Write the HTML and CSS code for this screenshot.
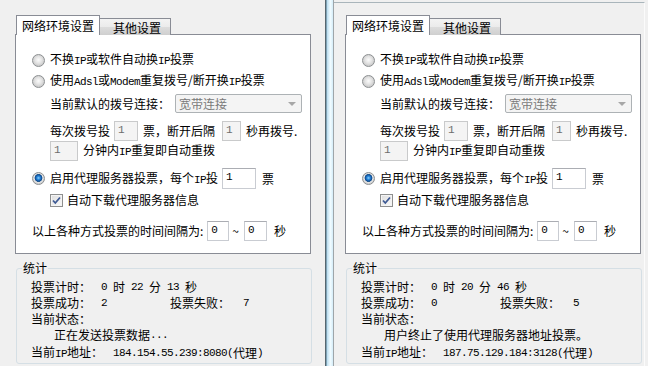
FILE: index.html
```html
<!DOCTYPE html>
<html>
<head>
<meta charset="utf-8">
<link rel="stylesheet" href="styles.css">
</head>
<body>
<div class="screen">
  <div class="win win-left">
    <div class="tabs">
      <div class="tab tab-active">网络环境设置</div>
      <div class="tab tab-other">其他设置</div>
    </div>
    <div class="panel">
      <div class="row r1"><span class="radio"></span><span>不换<span class="m">IP</span>或软件自动换<span class="m">IP</span>投票</span></div>
      <div class="row r2"><span class="radio"></span><span>使用<span class="m">Adsl</span>或<span class="m">Modem</span>重复拨号/断开换<span class="m">IP</span>投票</span></div>
      <div class="row r3 ind"><span>当前默认的拨号连接：</span><div class="combo"><span>宽带连接</span><span class="arrow"></span></div></div>
      <div class="row r4 ind"><span>每次拨号投</span><span class="inp dis i1">1</span><span class="t1">票，断开后隔</span><span class="inp dis i2">1</span><span class="t2">秒再拨号.</span></div>
      <div class="row r5 ind"><span class="inp dis i3">1</span><span class="t3">分钟内<span class="m">IP</span>重复即自动重拨</span></div>
      <div class="row r6"><span class="radio on"></span><span>启用代理服务器投票，每个<span class="m">IP</span>投</span><span class="inp i4">1</span><span class="t4">票</span></div>
      <div class="row r7 ind"><span class="check"><svg width="13" height="13" viewBox="0 0 13 13"><path d="M3 6.5 L5.3 9 L10 3.5" fill="none" stroke="#3e5a94" stroke-width="1.8"/></svg></span><span>自动下载代理服务器信息</span></div>
      <div class="row r8"><span>以上各种方式投票的时间间隔为:</span><span class="inp i5">0</span><span class="tilde">~</span><span class="inp i6">0</span><span class="t5">秒</span></div>
    </div>
    <fieldset class="group">
      <legend>统计</legend>
      <div class="srow"><span class="lab l1">投票计时：</span><span class="m">0 </span>时<span class="m"> 22 </span>分<span class="m"> 13 </span>秒</div>
      <div class="srow"><span class="lab l1">投票成功：</span><span class="m v1">2</span><span class="lab l2">投票失败：</span><span class="m">7</span></div>
      <div class="srow"><span class="lab">当前状态：</span></div>
      <div class="srow status">正在发送投票数据<span class="m">...</span></div>
      <div class="srow ip"><span class="lab l3">当前<span class="m">IP</span>地址：</span><span class="m">184.154.55.239:8080(</span>代理<span class="m">)</span></div>
    </fieldset>
  </div>
  <div class="sep"><div class="glass"></div></div>
  <div class="win win-right">
    <div class="tabs">
      <div class="tab tab-active">网络环境设置</div>
      <div class="tab tab-other">其他设置</div>
    </div>
    <div class="panel">
      <div class="row r1"><span class="radio"></span><span>不换<span class="m">IP</span>或软件自动换<span class="m">IP</span>投票</span></div>
      <div class="row r2"><span class="radio"></span><span>使用<span class="m">Adsl</span>或<span class="m">Modem</span>重复拨号/断开换<span class="m">IP</span>投票</span></div>
      <div class="row r3 ind"><span>当前默认的拨号连接：</span><div class="combo"><span>宽带连接</span><span class="arrow"></span></div></div>
      <div class="row r4 ind"><span>每次拨号投</span><span class="inp dis i1">1</span><span class="t1">票，断开后隔</span><span class="inp dis i2">1</span><span class="t2">秒再拨号.</span></div>
      <div class="row r5 ind"><span class="inp dis i3">1</span><span class="t3">分钟内<span class="m">IP</span>重复即自动重拨</span></div>
      <div class="row r6"><span class="radio on"></span><span>启用代理服务器投票，每个<span class="m">IP</span>投</span><span class="inp i4">1</span><span class="t4">票</span></div>
      <div class="row r7 ind"><span class="check"><svg width="13" height="13" viewBox="0 0 13 13"><path d="M3 6.5 L5.3 9 L10 3.5" fill="none" stroke="#3e5a94" stroke-width="1.8"/></svg></span><span>自动下载代理服务器信息</span></div>
      <div class="row r8"><span>以上各种方式投票的时间间隔为:</span><span class="inp i5">0</span><span class="tilde">~</span><span class="inp i6">0</span><span class="t5">秒</span></div>
    </div>
    <fieldset class="group">
      <legend>统计</legend>
      <div class="srow"><span class="lab l1">投票计时：</span><span class="m">0 </span>时<span class="m"> 20 </span>分<span class="m"> 46 </span>秒</div>
      <div class="srow"><span class="lab l1">投票成功：</span><span class="m v1">0</span><span class="lab l2">投票失败：</span><span class="m">5</span></div>
      <div class="srow"><span class="lab">当前状态：</span></div>
      <div class="srow status">用户终止了使用代理服务器地址投票。</div>
      <div class="srow ip"><span class="lab l3">当前<span class="m">IP</span>地址：</span><span class="m">187.75.129.184:3128(</span>代理<span class="m">)</span></div>
    </fieldset>
  </div>
</div>
</body>
</html>
```

FILE: styles.css
```css
* { box-sizing: border-box; margin: 0; padding: 0; }
html, body { width: 648px; height: 366px; overflow: hidden; }
body {
  background: #f0f0f0;
  font-family: "Noto Sans CJK SC", "Noto Sans", sans-serif;
  font-size: 12px;
  line-height: 16px;
  color: #000;
}
.m { font-family: "Liberation Mono", monospace; font-size: 11px; letter-spacing: -0.6px; white-space: pre; }

.screen { display: flex; height: 366px; padding-top: 2px; }
.win { height: 364px; background: #f0f0f0; }
.win-left { width: 323px; margin-left: 2px; padding: 13px 0 0 13px; }
.win-right {
  width: 311px;
  padding: 12px 0 0 11px;
  border-top: 1px solid #a9b5bb;
  border-right: 1px solid #fbfbfb;
}

.sep {
  width: 9px;
  margin-top: -2px;
  height: 366px;
  border-left: 1px solid #56666f;
  border-right: 1px solid #9ea5a9;
  background: #7fa3b6;
  padding-left: 1px;
}
.glass {
  height: 100%;
  background: linear-gradient(90deg, #b9dcef, #e2f4fc 40%, #f0fbff 60%, #d3ecf8);
}

.tabs { display: flex; align-items: flex-end; height: 20px; }
.tab { white-space: nowrap; }
.tab-active {
  position: relative;
  z-index: 1;
  width: 84px;
  height: 20px;
  margin-left: 1px;
  padding: 2px 0 0 5px;
  background: #fff;
  border: 1px solid #898c95;
  border-bottom: none;
}
.tab-other {
  width: 71px;
  height: 17px;
  padding: 1px 0 0 13px;
  border: 1px solid #898c95;
  border-left: none;
  border-bottom: none;
  background: linear-gradient(#f3f3f3, #ebebeb 50%, #dddddd 50%, #cfcfcf);
}

.panel {
  width: 296px;
  height: 220px;
  margin-top: -1px;
  border: 1px solid #898c95;
  background: #fff;
  padding: 15px 0 0 16px;
}
.row { display: flex; align-items: center; white-space: nowrap; }
.ind { margin-left: 18px; }
.r1 { height: 20px; }
.r2 { height: 20px; margin-top: 1px; }
.r3 { height: 19px; margin-top: 3px; }
.r4 { height: 20px; margin-top: 8px; }
.r5 { height: 20px; margin-top: 0; }
.r6 { height: 21px; margin-top: 7px; }
.r7 { height: 14px; margin-top: 4px; }
.r8 { height: 20px; margin-top: 14px; }

.radio {
  width: 13px;
  height: 13px;
  margin-right: 5px;
  border-radius: 50%;
  border: 1px solid #8c8f91;
  background: radial-gradient(circle at 50% 45%, #fbfbfb 0, #e6e6e6 3px, #cfcfcf 5.5px);
  flex: none;
}
.radio.on {
  background: radial-gradient(circle at 50% 45%, #8fd0f7 0, #2b8be0 1.6px, #0f4f99 3.2px, #2a5d8f 3.7px, #e8e8e8 4.2px, #d2d2d2 5.5px);
}
.check {
  width: 13px;
  height: 13px;
  margin-right: 4px;
  border: 1px solid #8e8f8f;
  background: linear-gradient(135deg, #dcdcdc, #fbfbfb);
  box-shadow: inset 0 0 0 1px #f4f4f4;
  flex: none;
}
.check svg { display: block; margin: -1px; }

.combo {
  display: flex;
  align-items: center;
  justify-content: space-between;
  width: 127px;
  height: 19px;
  margin-left: 5px;
  padding: 0 5px 0 3px;
  border: 1px solid #adb2b5;
  border-radius: 2px;
  background: #f4f4f4;
  color: #7a7a7a;
}
.arrow {
  width: 0;
  height: 0;
  border-left: 4px solid transparent;
  border-right: 4px solid transparent;
  border-top: 4px solid #a7a7a7;
}

.inp {
  display: block;
  height: 20px;
  padding: 1px 0 0 3px;
  border: 1px solid #c9ccd2;
  border-top-color: #abadb3;
  background: #fff;
  font-family: "Liberation Mono", monospace;
  font-size: 11px;
  line-height: 14px;
  flex: none;
}
.inp.dis { background: #f4f4f4; border-color: #c9cacb; color: #6d6d6d; }
.i1 { width: 24px; margin-left: 4px; }
.t1 { margin-left: 5px; }
.i2 { width: 19px; margin-left: 7px; }
.t2 { margin-left: 5px; }
.i3 { width: 28px; }
.t3 { margin-left: 5px; }
.i4 { width: 34px; height: 21px; margin-left: 4px; }
.t4 { margin-left: 6px; }
.i5 { width: 22px; margin-left: 4px; }
.tilde { margin-left: 3px; }
.i6 { width: 23px; margin-left: 5px; }
.t5 { margin-left: 7px; }

.group {
  width: 296px;
  margin: 6px 0 0 1px;
  padding: 3px 0 2px 14px;
  border: 1px solid #d5dfe5;
  border-radius: 3px;
  min-width: 0;
}
.group legend { margin-left: -9px; padding: 0 1px; line-height: 16px; }
.srow { height: 16px; white-space: nowrap; display: flex; align-items: center; }
.lab { display: inline-block; }
.l1 { width: 70px; }
.v1 { width: 69px; }
.l2 { width: 73px; }
.l3 { width: 82px; }
.status { padding-left: 23px; }
.ip { margin-top: 1px; height: 17px; }
```
